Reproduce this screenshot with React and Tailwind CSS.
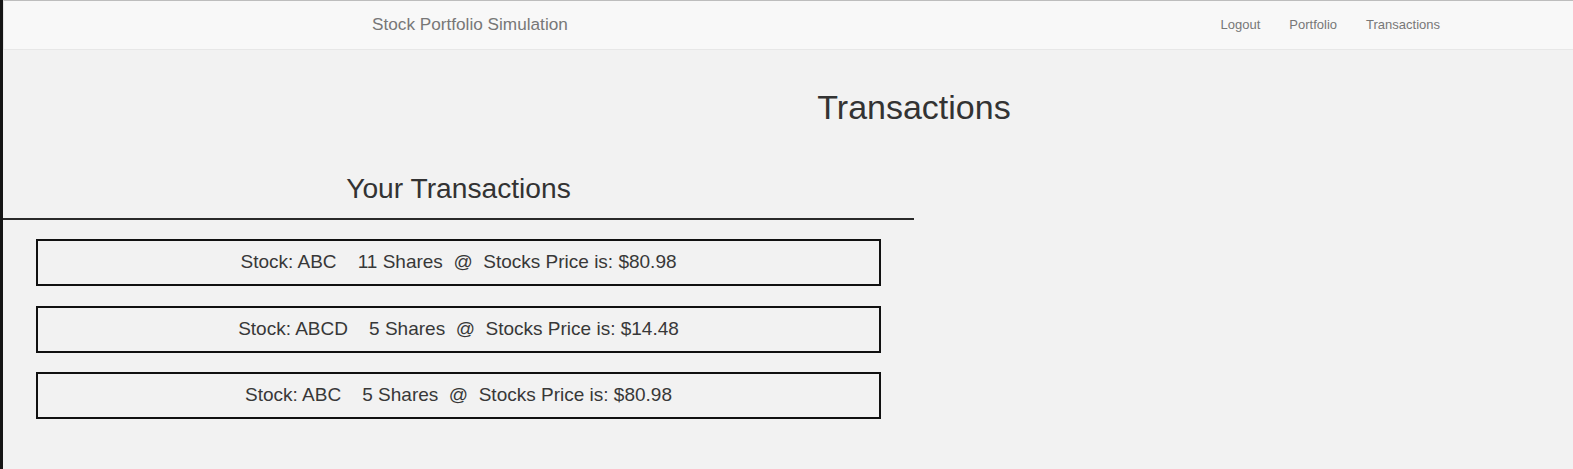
export default function App() {
  const transactions = [
    { symbol: 'ABC', shares: 11, price: '80.98' },
    { symbol: 'ABCD', shares: 5, price: '14.48' },
    { symbol: 'ABC', shares: 5, price: '80.98' },
  ];

  return (
    <div
      className="min-h-[469px] bg-[#f2f2f2] border-l-[3px] border-l-[#151515] text-[#333]"
      style={{ fontFamily: '"Liberation Sans", Arial, sans-serif' }}
    >
      {/* Navbar */}
      <nav className="h-[50px] flex items-center justify-between bg-[#f8f8f8] border-t border-t-[#bdbdbd] border-b border-b-[#e7e7e7] border-l border-l-[#e4e4e4] pl-[368px] pr-[133px]">
        <span className="text-[17.2px] text-[#777]">Stock Portfolio Simulation</span>
        <div className="flex items-center gap-[29px] text-[13px] text-[#777]">
          <a>Logout</a>
          <a>Portfolio</a>
          <a>Transactions</a>
        </div>
      </nav>

      <h1 className="mt-[40px] pl-[252px] text-center text-[34px] leading-none">Transactions</h1>

      {/* Transactions column */}
      <div className="w-[911px]">
        <h2 className="mt-[50px] text-center text-[28.2px] leading-none">Your Transactions</h2>
        <div className="mt-[16px] h-[2px] bg-[#2a2a2a]" />
        <div className="mt-[19px] flex flex-col gap-[19.5px] px-[33px]">
          {transactions.map((t, i) => (
            <div
              key={i}
              className="h-[47px] flex items-center justify-center border-2 border-[#111] text-[19px] text-[#383838] whitespace-pre"
            >
              {`Stock: ${t.symbol}    ${t.shares} Shares  @  Stocks Price is: $${t.price}`}
            </div>
          ))}
        </div>
      </div>
    </div>
  );
}
